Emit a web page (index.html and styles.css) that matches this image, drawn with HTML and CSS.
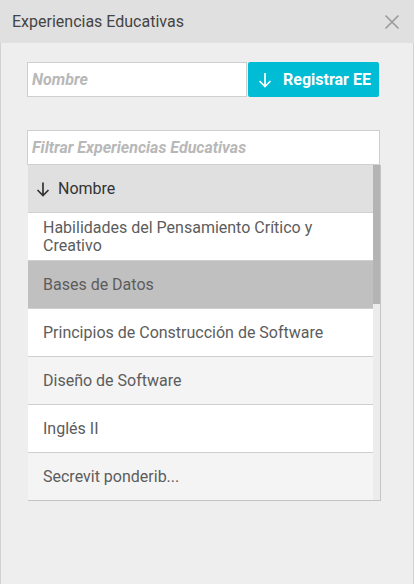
FILE: index.html
```html
<!DOCTYPE html>
<html lang="es">
<head>
<meta charset="utf-8">
<title>Experiencias Educativas</title>
<link rel="stylesheet" href="styles.css">
</head>
<body>
<div class="dialog">
  <header class="dialog-header">
    <h1 class="dialog-title">Experiencias Educativas</h1>
    <button class="close-btn" aria-label="Cerrar">
      <svg width="16" height="16" viewBox="0 0 16 16"><path d="M1.5 1.5 L14.5 14.5 M14.5 1.5 L1.5 14.5" stroke="#9a9a9a" stroke-width="1.6" fill="none"/></svg>
    </button>
  </header>
  <main class="dialog-body">
    <div class="add-row">
      <input class="name-input" type="text" placeholder="Nombre">
      <button class="add-btn">
        <svg class="add-icon" width="14" height="16" viewBox="0 0 14 16"><path d="M7 1 V14.5 M1.5 9 L7 14.5 L12.5 9" stroke="#fff" stroke-width="1.7" fill="none"/></svg>
        <span>Registrar EE</span>
      </button>
    </div>
    <input class="filter-input" type="text" placeholder="Filtrar Experiencias Educativas">
    <div class="grid">
      <div class="grid-list">
        <div class="grid-head">
          <svg class="sort-icon" width="14" height="16" viewBox="0 0 14 16"><path d="M7 1.5 V14.5 M1.5 9 L7 14.5 L12.5 9" stroke="#333" stroke-width="1.7" fill="none"/></svg>
          <span>Nombre</span>
        </div>
        <div class="row row-white two-line">Habilidades del Pensamiento Crítico y Creativo</div>
        <div class="row row-selected">Bases de Datos</div>
        <div class="row row-white">Principios de Construcción de Software</div>
        <div class="row row-alt">Diseño de Software</div>
        <div class="row row-white">Inglés II</div>
        <div class="row row-alt">Secrevit ponderib...</div>
      </div>
      <div class="scrollbar"><div class="scroll-thumb"></div></div>
    </div>
  </main>
</div>
</body>
</html>
```

FILE: styles.css
```css
* { box-sizing: border-box; }
html, body {
  margin: 0;
  padding: 0;
  height: 100%;
  background: #eeeeee;
  font-family: Roboto, "Liberation Sans", sans-serif;
}
.dialog {
  display: flex;
  flex-direction: column;
  height: 100%;
}
.dialog-header {
  height: 43px;
  flex: none;
  background: #e0e0e0;
  display: flex;
  align-items: center;
  justify-content: space-between;
  padding: 0 12px 0 12px;
}
.dialog-title {
  margin: 0;
  font-size: 16px;
  font-weight: 400;
  color: #444;
  padding-bottom: 1px;
}
.close-btn {
  border: 0;
  background: transparent;
  padding: 0;
  margin-right: 2px;
  width: 16px;
  height: 16px;
  display: flex;
}
.dialog-body {
  flex: 1;
  border-left: 1px solid #d2d2d2;
  border-right: 1px solid #d2d2d2;
  padding: 19px 34px 0 26px;
}
.add-row {
  display: flex;
  gap: 1px;
  height: 35px;
}
.name-input {
  width: 220px;
  height: 35px;
  border: 1px solid #cfcfcf;
  background: #fff;
  padding: 0 4px;
  font-family: inherit;
  font-size: 16px;
  outline: none;
}
.name-input::placeholder,
.filter-input::placeholder {
  color: #b8b8b8;
  font-style: italic;
  font-weight: 700;
}
.add-btn {
  width: 131px;
  height: 35px;
  border: 0;
  border-radius: 2px;
  background: #00bcd4;
  color: #fff;
  font-family: inherit;
  font-size: 16px;
  font-weight: 700;
  display: flex;
  align-items: center;
  gap: 11px;
  padding: 0 0 0 10px;
}
.filter-input {
  display: block;
  margin-top: 33px;
  width: 353px;
  height: 35px;
  border: 1px solid #cfcfcf;
  background: #fff;
  padding: 0 4px;
  font-family: inherit;
  font-size: 16px;
  outline: none;
}
.grid {
  width: 353px;
  margin-left: 1px;
  border-right: 1px solid #c4c4c4;
  border-bottom: 1px solid #c4c4c4;
  height: 336px;
  background: #ececec;
  display: flex;
}
.grid-list {
  flex: 1;
  overflow: hidden;
}
.scrollbar {
  width: 7px;
  flex: none;
  background: #ececec;
}
.scroll-thumb {
  height: 139px;
  background: #b4b4b4;
}
.grid-head {
  height: 48px;
  background: #e0e0e0;
  display: flex;
  align-items: center;
  gap: 8px;
  padding-left: 8px;
  font-size: 16px;
  color: #333;
  border-bottom: 1px solid #d0d0d0;
}
.row {
  height: 48px;
  display: flex;
  align-items: center;
  padding: 0 15px;
  font-size: 16px;
  color: #5c5c5c;
  border-bottom: 1px solid #cfcfcf;
  line-height: 18px;
}
.two-line { padding-right: 40px; }
.row-white { background: #fff; }
.row-alt { background: #f4f4f4; }
.row-selected { background: #c0c0c0; }
```
